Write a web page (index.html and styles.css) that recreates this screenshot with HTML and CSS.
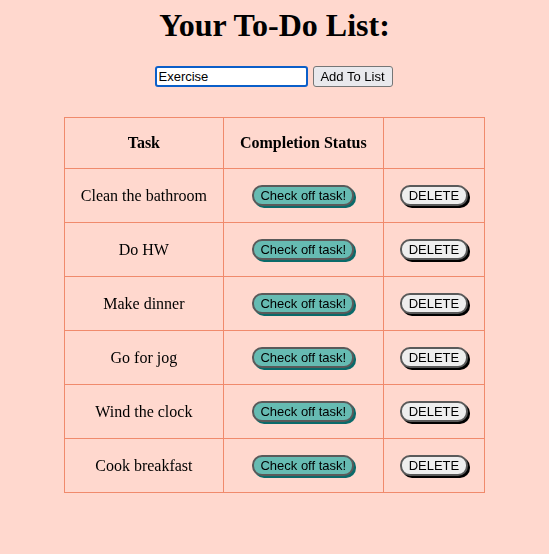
FILE: index.html
```html
<!DOCTYPE html>
<html>
<head>
<meta charset="utf-8">
<link rel="stylesheet" href="styles.css">
</head>
<body>
<h1 class="title">Your To-Do List:</h1>
<div class="add-row">
  <input class="task-input" type="text" value="Exercise" autofocus>
  <button class="add-btn">Add To List</button>
</div>
<table class="todo">
  <thead>
    <tr><th>Task</th><th>Completion Status</th><th></th></tr>
  </thead>
  <tbody>
    <tr><td>Clean the bathroom</td><td><button class="check">Check off task!</button></td><td><button class="del">DELETE</button></td></tr>
    <tr><td>Do HW</td><td><button class="check">Check off task!</button></td><td><button class="del">DELETE</button></td></tr>
    <tr><td>Make dinner</td><td><button class="check">Check off task!</button></td><td><button class="del">DELETE</button></td></tr>
    <tr><td>Go for jog</td><td><button class="check">Check off task!</button></td><td><button class="del">DELETE</button></td></tr>
    <tr><td>Wind the clock</td><td><button class="check">Check off task!</button></td><td><button class="del">DELETE</button></td></tr>
    <tr><td>Cook breakfast</td><td><button class="check">Check off task!</button></td><td><button class="del">DELETE</button></td></tr>
  </tbody>
</table>
</body>
</html>
```
FILE: styles.css
```css
html, body {
  background: #ffd8ce;
}
body {
  margin: 0;
  font-family: "Liberation Serif", "Times New Roman", serif;
  color: #000;
}
.title {
  margin: 7px 0 0;
  font-size: 32px;
  line-height: 37px;
  text-align: center;
  font-weight: bold;
}
.add-row {
  display: flex;
  justify-content: center;
  align-items: center;
  gap: 5px;
  margin-top: 22px;
  padding-right: 2px;
}
.task-input {
  width: 153px;
  height: 21px;
  box-sizing: border-box;
  border: 2px solid #0b5fc9;
  border-radius: 3px;
  padding: 1px 2px;
  font-family: "Liberation Sans", Arial, sans-serif;
  font-size: 13px;
  outline: none;
  background: #fff;
  margin: 0;
}
.add-btn {
  width: 80px;
  height: 21px;
  box-sizing: border-box;
  border: 1px solid #767676;
  border-radius: 3px;
  background: #e9e9ed;
  font-family: "Liberation Sans", Arial, sans-serif;
  font-size: 13px;
  padding: 0;
  margin: 0;
}
.todo {
  margin: 30px auto 0;
  border-collapse: collapse;
}
.todo th, .todo td {
  border: 1px solid #f08a6c;
  padding: 16px;
  text-align: center;
  font-size: 16px;
}
.todo th {
  height: 18px;
}
.check, .del {
  font-family: "Liberation Sans", Arial, sans-serif;
  font-size: 13px;
  border: 2px solid #5a5a5a;
  border-radius: 10px;
  padding: 1px 6px;
  margin: 0;
  line-height: 15px;
}
.check {
  background: #66bbb2;
  box-shadow: 2px 2px 0 #0a6a6a;
}
.del {
  padding: 1px 7px;
  background: #eeeeee;
  box-shadow: 2px 2px 0 #000;
}
```
